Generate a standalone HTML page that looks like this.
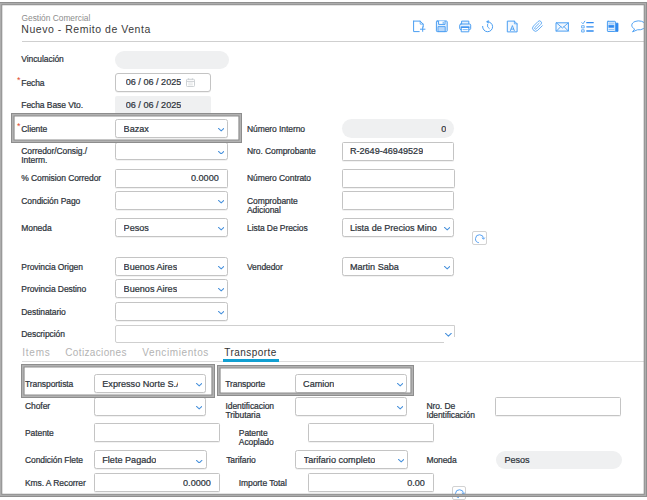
<!DOCTYPE html>
<html><head><meta charset="utf-8"><title>Nuevo - Remito de Venta</title>
<style>
*{box-sizing:border-box;margin:0;padding:0}
html,body{width:647px;height:500px;overflow:hidden;background:#fff}
body{position:relative;font-family:"Liberation Sans",sans-serif;color:#2b3138}
#pg{position:absolute;left:0;top:0;width:647px;height:500px;overflow:hidden}
#pg>div,#pg>span,#pg>svg{position:absolute}
.frame{left:-.7px;top:1.8px;width:647.9px;height:495.2px;pointer-events:none;
 box-shadow:inset 0 0 0 1px #8f8f8f,inset 0 0 0 2.3px #adadad,inset 0 0 0 3.3px #909090;z-index:20}
.sub{font-size:8.4px;line-height:10px;color:#8d8d8d;white-space:nowrap}
.ttl{font-size:10.5px;line-height:13px;letter-spacing:.53px;color:#3b3b3b;white-space:nowrap}
.hline{height:1.4px;background:#cfcfcf}
.lb{font-size:8.5px;line-height:9px;letter-spacing:-.08px;white-space:nowrap;color:#2d333a;-webkit-text-stroke:.22px #2d333a}
.req{font-size:9px;line-height:9px;color:#e0492f}
.sel,.inp,.dis,.pill,.desc{background:#fff;border:1px solid #c4c4c4;border-radius:2.5px}
.inp{border-radius:1.5px}
.inp.date{border-radius:3px}
.sel,.inp{box-shadow:0 .7px 0 rgba(0,0,0,.07)}
.pill{background:#eff0f1;border:none;border-radius:9.5px}
.dis{background:#eff0f1;border:none;border-radius:2px}
.v{position:absolute;left:7.3px;font-size:9.1px;line-height:10px;white-space:nowrap;overflow:hidden;color:#2d333a;-webkit-text-stroke:.22px #2d333a}
.v.r{left:auto;right:8px}
.date .v{left:9.4px}.dis .v{left:10.4px}
.pill .v{left:8.8px}
.pill .v.r{left:auto;right:8px}
.chev{position:absolute;right:2.9px;top:50%;margin-top:-.3px;width:6.4px;height:3.6px}
.cal{position:absolute}
.hb{background:transparent;pointer-events:none;z-index:5;
 box-shadow:inset 0 0 0 1px #8d8d8d,inset 0 0 0 2.5px #b2b2b2,inset 0 0 0 3.6px #8d8d8d}
.desc{border-color:#cfcfcf;border-radius:2px 0 0 2px}
.tab{font-size:10px;line-height:12px;letter-spacing:.45px;color:#b3b3b3;white-space:nowrap}
.tab.act{color:#333}
.tline{height:1px;background:#dcdcdc}
.tul{height:2.9px;background:#12a0d2}
.rf{height:13.4px;border:1px solid #d2d2d2;border-radius:2px;background:#fff}
.rf svg{position:absolute;left:-.7px;top:-.4px}
.ic{position:absolute}
</style></head>
<body><div id="pg">
<div class="sub" style="left:21.5px;top:12.6px">Gestión Comercial</div>
<div class="ttl" style="left:21.3px;top:22.6px">Nuevo - Remito de Venta</div>
<div class="hline" style="left:21.5px;top:40.8px;width:622px"></div>
<svg class="ic" style="left:0;top:0" width="647" height="500" viewBox="0 0 647 500" fill="none" stroke="#4a9ef2" stroke-width="1" stroke-linejoin="round" stroke-linecap="round">
<!-- 1 new document -->
<path d="M413.6 21.1H420.2L423.2 24.1V27M419.2 31.6H413.6V21.1" />
<path d="M420.2 21.1V24.1H423.2" stroke-width=".8"/>
<path d="M422.7 26.9V31.4M420.4 29.2H425"/>
<!-- 2 save -->
<rect x="436.4" y="21" width="10.8" height="10.6" rx=".8" fill="#e4f0fd"/>
<path d="M438.6 21.2V24.4H445V21.2" fill="#fff"/>
<rect x="438.4" y="26.6" width="6.8" height="5" fill="#b9d8fa" stroke-width=".9"/>
<path d="M443.2 22.2V23.4" stroke-width=".9"/>
<!-- 3 printer -->
<path d="M461.6 24V21.1H468.8V24" fill="#e4f0fd"/>
<rect x="459.7" y="24" width="11" height="5.6" rx="1.2" fill="#e4f0fd"/>
<path d="M461.6 27.2H468.8V31.8H461.6Z" fill="#fff"/>
<path d="M461.4 27.1H469" stroke="#2f8af0" stroke-width="1.2"/>
<path d="M463 29.6H467.4" stroke-width=".7"/>
<!-- 4 history -->
<path d="M482.6 26.4A5 5 0 1 0 487.4 21.7" />
<path d="M488.3 20.6L486.4 21.8L488.3 23Z" fill="#4a9ef2" stroke-width=".5"/>
<path d="M487.6 24.2V26.9L489.4 28.6" stroke-width=".9"/>
<!-- 5 doc with A -->
<path d="M507.7 21.1H514.4L517.1 23.8V31.9H507.7Z" fill="#f1f7fe"/>
<path d="M514.4 21.1V23.8H517.1" stroke-width=".8"/>
<path d="M510.5 30.6L512.4 25.6L514.3 30.6M511.1 29.1H513.7" stroke-width=".9"/>
<!-- 6 paperclip -->
<g transform="translate(531.6 20.2) scale(.5)"><path d="M21.44 11.05l-9.19 9.19a6 6 0 0 1-8.49-8.49l9.19-9.19a4 4 0 0 1 5.66 5.66l-9.2 9.19a2 2 0 0 1-2.83-2.83l8.49-8.48" stroke-width="1.7"/></g>
<!-- 7 envelope -->
<rect x="556.4" y="22.8" width="12" height="8.3" fill="#f1f7fe"/>
<path d="M556.4 22.8L562.4 28L568.4 22.8M556.4 31.1L560.8 26.6M568.4 31.1L564 26.6" stroke-width=".9"/>
<!-- 8 checklist -->
<path d="M586.8 22.7H593.2M586.8 26.8H593.2M586.8 31H593.2" stroke="#2f8af0" stroke-width="1.3"/>
<path d="M581.8 22.6L583 23.8L584.8 21.2" stroke-width=".9"/>
<rect x="582" y="25.7" width="2.2" height="2.2" stroke-width=".8"/>
<rect x="582" y="29.8" width="2.2" height="2.2" stroke-width=".8"/>
<!-- 9 news doc -->
<path d="M615.4 23.2H618V31.4H615.4Z" fill="#2f8af0" stroke="#2f8af0" stroke-width=".8"/>
<rect x="607.4" y="21.3" width="8" height="10.2" rx=".6" fill="#e4f0fd"/>
<rect x="609" y="25.2" width="4.8" height="2.2" fill="#2f8af0" stroke="#2f8af0" stroke-width=".6"/>
<path d="M609 23.2H613.8M609 29.6H613.8" stroke-width=".7" opacity=".8"/>
<!-- 10 speech bubble -->
<path d="M634.3 28.9A7 4.5 0 1 1 637.4 29.8L632.9 31.7Z" stroke-width=".95"/>
</svg>

<div class="lb" style="left:21.3px;top:55px">Vinculación</div>
<div class="pill" style="left:115.3px;top:50.5px;width:113.6px;height:18.3px"></div>
<span class="req" style="left:17.1px;top:76px">*</span><div class="lb" style="left:21.3px;top:79px">Fecha</div>
<div class="inp date" style="left:115.3px;top:72.95px;width:95.5px;height:19.3px"><span class="v" style="top:2.90px;">06 / 06 / 2025</span></div>
<svg class="cal" style="left:186.2px;top:77.6px" width="9" height="9" viewBox="0 0 9 9"><rect x="0.5" y="1.3" width="8" height="7.2" rx="0.8" fill="none" stroke="#cdd1d4" stroke-width="1"/><path d="M0.5 3.4H8.5M2.6 0.3V2M6.4 0.3V2" stroke="#cdd1d4" stroke-width="1" fill="none"/><path d="M2.2 5h4.6M2.2 6.8h4.6" stroke="#d8dbdd" stroke-width="0.8"/></svg>
<div class="lb" style="left:21.3px;top:101px">Fecha Base Vto.</div>
<div class="dis" style="left:115.3px;top:96.05px;width:95.5px;height:18.3px"><span class="v" style="top:3.80px;">06 / 06 / 2025</span></div>
<span class="req" style="left:17.1px;top:122px">*</span><div class="lb" style="left:21.3px;top:125px">Cliente</div>
<div class="sel" style="left:115.3px;top:118.75px;width:112.5px;height:19.1px"><span class="v" style="top:4.10px;">Bazax</span><svg class="chev" viewBox="0 0 7 4"><path d="M0.5 0.5 L3.5 3.3 L6.5 0.5" fill="none" stroke="#4590dc" stroke-width="1.15" stroke-linecap="round" stroke-linejoin="round"/></svg></div>
<div class="hb" style="left:11px;top:112.7px;width:230.7px;height:30px"></div>
<div class="lb" style="left:247px;top:125px">Número Interno</div>
<div class="pill" style="left:341.7px;top:119.4px;width:112.6px;height:18.4px"><span class="v r" style="top:4.45px;">0</span></div>
<div class="lb" style="left:21.3px;top:147px">Corredor/Consig./<br>Interm.</div>
<div class="sel" style="left:115.3px;top:141.9px;width:112.5px;height:17.9px"><svg class="chev" viewBox="0 0 7 4"><path d="M0.5 0.5 L3.5 3.3 L6.5 0.5" fill="none" stroke="#4590dc" stroke-width="1.15" stroke-linecap="round" stroke-linejoin="round"/></svg></div>
<div class="lb" style="left:247px;top:147px">Nro. Comprobante</div>
<div class="inp" style="left:341.6px;top:141.65px;width:112.2px;height:19.0px"><span class="v" style="top:3.20px;">R-2649-46949529</span></div>
<div class="lb" style="left:21.3px;top:174px">% Comision Corredor</div>
<div class="inp" style="left:115.3px;top:168.55px;width:112.5px;height:19.0px"><span class="v r" style="top:3.30px;">0.0000</span></div>
<div class="lb" style="left:247px;top:174px">Número Contrato</div>
<div class="inp" style="left:341.6px;top:168.65px;width:113.3px;height:19.0px"></div>
<div class="lb" style="left:21.3px;top:197px">Condición Pago</div>
<div class="sel" style="left:115.3px;top:190.95px;width:112.5px;height:18.9px"><svg class="chev" viewBox="0 0 7 4"><path d="M0.5 0.5 L3.5 3.3 L6.5 0.5" fill="none" stroke="#4590dc" stroke-width="1.15" stroke-linecap="round" stroke-linejoin="round"/></svg></div>
<div class="lb" style="left:247px;top:197px">Comprobante<br>Adicional</div>
<div class="inp" style="left:341.6px;top:191.15px;width:112.5px;height:18.9px"></div>
<div class="lb" style="left:21.3px;top:224px">Moneda</div>
<div class="sel" style="left:115.3px;top:218.05px;width:112.5px;height:18.9px"><span class="v" style="top:3.80px;">Pesos</span><svg class="chev" viewBox="0 0 7 4"><path d="M0.5 0.5 L3.5 3.3 L6.5 0.5" fill="none" stroke="#4590dc" stroke-width="1.15" stroke-linecap="round" stroke-linejoin="round"/></svg></div>
<div class="lb" style="left:247px;top:224px">Lista De Precios</div>
<div class="sel" style="left:341.6px;top:218.15px;width:112.2px;height:19.2px"><span class="v" style="top:3.70px;">Lista de Precios Mino</span><svg class="chev" viewBox="0 0 7 4"><path d="M0.5 0.5 L3.5 3.3 L6.5 0.5" fill="none" stroke="#4590dc" stroke-width="1.15" stroke-linecap="round" stroke-linejoin="round"/></svg></div>
<div class="rf" style="left:472.4px;top:231.2px;width:14.4px"><svg width="14" height="13" viewBox="0 0 14 13"><path d="M5.9 10.7A4 4 0 1 1 10.5 6.7" fill="none" stroke="#5aa3f3" stroke-width="1"/><path d="M9 5.8L10.5 7.3L11.8 5.6" fill="none" stroke="#5aa3f3" stroke-width="1" stroke-linejoin="round"/></svg></div>
<div class="lb" style="left:21.3px;top:263px">Provincia Origen</div>
<div class="sel" style="left:115.3px;top:257.05px;width:112.5px;height:18.8px"><span class="v" style="top:3.80px;">Buenos Aires</span><svg class="chev" viewBox="0 0 7 4"><path d="M0.5 0.5 L3.5 3.3 L6.5 0.5" fill="none" stroke="#4590dc" stroke-width="1.15" stroke-linecap="round" stroke-linejoin="round"/></svg></div>
<div class="lb" style="left:247px;top:263px">Vendedor</div>
<div class="sel" style="left:341.6px;top:257.05px;width:112.2px;height:18.8px"><span class="v" style="top:3.80px;">Martin Saba</span><svg class="chev" viewBox="0 0 7 4"><path d="M0.5 0.5 L3.5 3.3 L6.5 0.5" fill="none" stroke="#4590dc" stroke-width="1.15" stroke-linecap="round" stroke-linejoin="round"/></svg></div>
<div class="lb" style="left:21.3px;top:285px">Provincia Destino</div>
<div class="sel" style="left:115.3px;top:279.25px;width:112.5px;height:18.8px"><span class="v" style="top:3.60px;">Buenos Aires</span><svg class="chev" viewBox="0 0 7 4"><path d="M0.5 0.5 L3.5 3.3 L6.5 0.5" fill="none" stroke="#4590dc" stroke-width="1.15" stroke-linecap="round" stroke-linejoin="round"/></svg></div>
<div class="lb" style="left:21.3px;top:308px">Destinatario</div>
<div class="sel" style="left:115.3px;top:302.15px;width:112.5px;height:18.9px"><svg class="chev" viewBox="0 0 7 4"><path d="M0.5 0.5 L3.5 3.3 L6.5 0.5" fill="none" stroke="#4590dc" stroke-width="1.15" stroke-linecap="round" stroke-linejoin="round"/></svg></div>
<div class="lb" style="left:21.3px;top:330px">Descripción</div>
<div class="desc" style="left:115.3px;top:325px;width:339.9px;height:17.8px"></div>
<div style="left:443.6px;top:337px;width:13px;height:7px;background:#fff"></div>
<div style="left:445px;top:333px;width:6.8px;height:3.8px"><svg style="position:absolute;left:0;top:0;width:6.8px;height:3.8px" viewBox="0 0 7 4"><path d="M0.5 0.5 L3.5 3.3 L6.5 0.5" fill="none" stroke="#4590dc" stroke-width="1.15" stroke-linecap="round" stroke-linejoin="round"/></svg></div>
<div class="tab" style="left:22.2px;top:347px;letter-spacing:.8px">Items</div>
<div class="tab" style="left:65.3px;top:347px;letter-spacing:.35px">Cotizaciones</div>
<div class="tab" style="left:142.3px;top:347px;letter-spacing:.6px">Vencimientos</div>
<div class="tab act" style="left:224.3px;top:347px;letter-spacing:.45px">Transporte</div>
<div class="tline" style="left:21.5px;top:361.3px;width:622px"></div>
<div class="tul" style="left:223px;top:359px;width:55.6px"></div>
<div class="lb" style="left:25px;top:380px">Transportista</div>
<div class="sel" style="left:94.0px;top:374.15px;width:111.9px;height:18.8px"><span class="v" style="top:3.70px;width:76px;">Expresso Norte S.A</span><svg class="chev" viewBox="0 0 7 4"><path d="M0.5 0.5 L3.5 3.3 L6.5 0.5" fill="none" stroke="#4590dc" stroke-width="1.15" stroke-linecap="round" stroke-linejoin="round"/></svg></div>
<div class="hb" style="left:21.2px;top:364.1px;width:193.9px;height:34px"></div>
<div class="lb" style="left:225.2px;top:380px">Transporte</div>
<div class="sel" style="left:294.8px;top:374.25px;width:112.5px;height:18.6px"><span class="v" style="top:3.60px;">Camion</span><svg class="chev" viewBox="0 0 7 4"><path d="M0.5 0.5 L3.5 3.3 L6.5 0.5" fill="none" stroke="#4590dc" stroke-width="1.15" stroke-linecap="round" stroke-linejoin="round"/></svg></div>
<div class="hb" style="left:217px;top:365.2px;width:196.9px;height:30.5px"></div>
<div class="lb" style="left:25px;top:402px">Chofer</div>
<div class="sel" style="left:94.0px;top:397.2px;width:111.9px;height:18.9px"><svg class="chev" viewBox="0 0 7 4"><path d="M0.5 0.5 L3.5 3.3 L6.5 0.5" fill="none" stroke="#4590dc" stroke-width="1.15" stroke-linecap="round" stroke-linejoin="round"/></svg></div>
<div class="lb" style="left:225.5px;top:402px">Identificacion<br>Tributaria</div>
<div class="sel" style="left:294.8px;top:397.1px;width:112.5px;height:18.9px"><svg class="chev" viewBox="0 0 7 4"><path d="M0.5 0.5 L3.5 3.3 L6.5 0.5" fill="none" stroke="#4590dc" stroke-width="1.15" stroke-linecap="round" stroke-linejoin="round"/></svg></div>
<div class="lb" style="left:426.4px;top:402px">Nro. De<br>Identificación</div>
<div class="inp" style="left:495.2px;top:397.05px;width:126.2px;height:19.3px"></div>
<div class="lb" style="left:25px;top:429px">Patente</div>
<div class="inp" style="left:94.0px;top:423.0px;width:125.9px;height:19.1px"></div>
<div class="lb" style="left:238.8px;top:429px">Patente<br>Acoplado</div>
<div class="inp" style="left:308.0px;top:423.0px;width:125.9px;height:19.1px"></div>
<div class="lb" style="left:25px;top:456px">Condición Flete</div>
<div class="sel" style="left:94.0px;top:450.45px;width:112.5px;height:18.9px"><span class="v" style="top:3.40px;">Flete Pagado</span><svg class="chev" viewBox="0 0 7 4"><path d="M0.5 0.5 L3.5 3.3 L6.5 0.5" fill="none" stroke="#4590dc" stroke-width="1.15" stroke-linecap="round" stroke-linejoin="round"/></svg></div>
<div class="lb" style="left:226.2px;top:456px">Tarifario</div>
<div class="sel" style="left:295.3px;top:450.25px;width:112.5px;height:18.9px"><span class="v" style="top:3.60px;">Tarifario completo</span><svg class="chev" viewBox="0 0 7 4"><path d="M0.5 0.5 L3.5 3.3 L6.5 0.5" fill="none" stroke="#4590dc" stroke-width="1.15" stroke-linecap="round" stroke-linejoin="round"/></svg></div>
<div class="lb" style="left:426.4px;top:456px">Moneda</div>
<div class="pill" style="left:495.6px;top:450.8px;width:126.6px;height:18.6px"><span class="v" style="top:4.05px;">Pesos</span></div>
<div class="lb" style="left:25px;top:479px">Kms. A Recorrer</div>
<div class="inp" style="left:94.0px;top:473.05px;width:125.9px;height:18.9px"><span class="v r" style="top:3.80px;">0.0000</span></div>
<div class="lb" style="left:238.8px;top:479px">Importe Total</div>
<div class="inp" style="left:308.0px;top:473.15px;width:125.9px;height:19.0px"><span class="v r" style="top:3.70px;">0.00</span></div>
<div class="rf" style="left:452.2px;top:486.2px;width:13.6px"><svg width="14" height="13" viewBox="0 0 14 13"><path d="M5.9 10.7A4 4 0 1 1 10.5 6.7" fill="none" stroke="#5aa3f3" stroke-width="1"/><path d="M9 5.8L10.5 7.3L11.8 5.6" fill="none" stroke="#5aa3f3" stroke-width="1" stroke-linejoin="round"/></svg></div>
<div class="frame"></div>
</div></body></html>
